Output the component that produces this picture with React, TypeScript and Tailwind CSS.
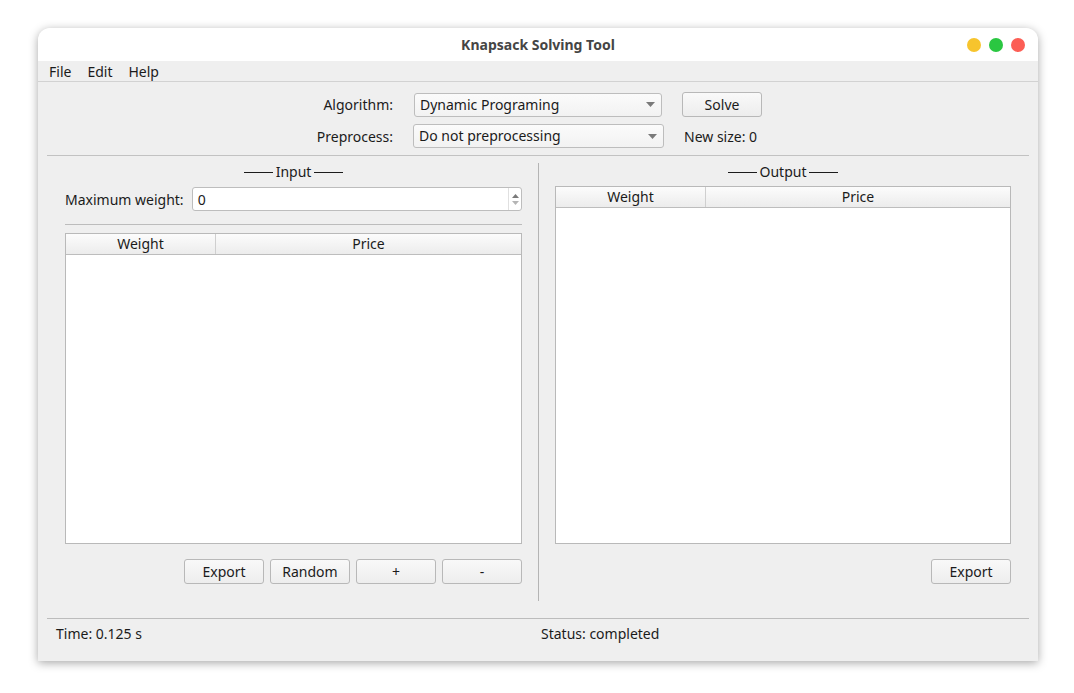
import React from "react";

const font = { fontFamily: '"Noto Sans", "Open Sans", sans-serif' };

function Button({ label, w = "w-[80px]" }: { label: string; w?: string }) {
  return (
    <button
      className={`${w} h-[25px] rounded-[3px] border border-[#b8b8b8] bg-gradient-to-b from-[#f9f9f9] to-[#ededed] text-[14px] leading-none text-[#1b1b1b]`}
    >
      {label}
    </button>
  );
}

function Combo({ value, w }: { value: string; w: string }) {
  return (
    <div
      className={`${w} h-[24px] rounded-[3px] border border-[#bdbdbd] bg-gradient-to-b from-[#fbfbfb] to-[#f2f2f2] flex items-center pl-[5px] pr-[6px] text-[14px] text-[#1b1b1b]`}
    >
      <span className="flex-1 leading-none">{value}</span>
      <svg width="9" height="5" viewBox="0 0 9 5">
        <path d="M0 0h9L4.5 5z" fill="#7a7a7a" />
      </svg>
    </div>
  );
}

function Heading({ text }: { text: string }) {
  return (
    <div className="h-[18px] flex items-center justify-center gap-[3px] text-[14px] leading-[18px]">
      <span className="w-[29px] border-t border-[#1b1b1b] mt-[1px]" />
      <span>{text}</span>
      <span className="w-[29px] border-t border-[#1b1b1b] mt-[1px]" />
    </div>
  );
}

function Table({ h }: { h: string }) {
  return (
    <div className={`w-full ${h} border border-[#b9b9b9] bg-white flex flex-col`}>
      <div className="h-[21px] flex border-b border-[#bdbdbd] bg-gradient-to-b from-[#fcfcfc] to-[#ececec] text-[14px] text-[#1b1b1b]">
        <div className="w-[150px] border-r border-[#cfcfcf] flex items-center justify-center leading-none">
          Weight
        </div>
        <div className="flex-1 flex items-center justify-center leading-none">Price</div>
      </div>
      <div className="flex-1" />
    </div>
  );
}

export default function App() {
  return (
    <div className="w-[1074px] h-[693px] bg-white pt-[28px] pl-[38px]" style={font}>
      <div className="w-[1000px] h-[633px] rounded-t-[12px] bg-[#efefef] shadow-[0_2px_10px_rgba(0,0,0,0.35)] flex flex-col overflow-hidden text-[#1b1b1b]">
        {/* Title bar */}
        <div className="relative h-[33px] bg-white flex items-center justify-center">
          <span className="text-[14px] font-bold text-[#454545] leading-none">Knapsack Solving Tool</span>
          <div className="absolute right-[13px] top-[10px] flex gap-[8px]">
            <span className="w-[14px] h-[14px] rounded-full bg-[#f7c42d]" />
            <span className="w-[14px] h-[14px] rounded-full bg-[#2ac741]" />
            <span className="w-[14px] h-[14px] rounded-full bg-[#fc5e55]" />
          </div>
        </div>

        {/* Menu */}
        <div className="h-[21px] border-b border-[#d2d2d2] flex items-center pl-[11px] text-[14px]">
          <span>File</span>
          <span className="ml-[16px]">Edit</span>
          <span className="ml-[16px]">Help</span>
        </div>

        {/* Top controls */}
        <div className="h-[73px] pt-[10px] flex flex-col gap-[7px] text-[14px]">
          <div className="flex items-center">
            <div className="w-[100px] ml-[255px] text-right">Algorithm:</div>
            <div className="ml-[21px]">
              <Combo value="Dynamic Programing" w="w-[248px]" />
            </div>
            <div className="ml-[20px]">
              <Button label="Solve" />
            </div>
          </div>
          <div className="flex items-center">
            <div className="w-[100px] ml-[255px] text-right">Preprocess:</div>
            <div className="ml-[20px]">
              <Combo value="Do not preprocessing" w="w-[251px]" />
            </div>
            <span className="ml-[20px]">New size: 0</span>
          </div>
        </div>

        <div className="mx-[9px] border-t border-[#c2c2c2]" />

        {/* Main area */}
        <div className="flex pl-[27px] pt-[7px] h-[462px]">
          <div className="w-[457px] flex flex-col">
            <Heading text="Input" />
            <div className="mt-[6px] flex items-center">
              <span className="text-[14px] mr-[8px]">Maximum weight:</span>
              <div className="flex-1 h-[24px] rounded-[3px] border border-[#bdbdbd] bg-white flex items-center pl-[5px] text-[14px]">
                <span className="flex-1">0</span>
                <div className="w-[13px] h-full flex flex-col items-center justify-center gap-[3px] border-l border-[#e0e0e0]">
                  <svg width="7" height="4" viewBox="0 0 7 4">
                    <path d="M0 4h7L3.5 0z" fill="#7a7a7a" />
                  </svg>
                  <svg width="7" height="4" viewBox="0 0 7 4">
                    <path d="M0 0h7L3.5 4z" fill="#b5b5b5" />
                  </svg>
                </div>
              </div>
            </div>
            <div className="mt-[13px] border-t border-[#bcbcbc]" />
            <div className="mt-[8px]">
              <Table h="h-[311px]" />
            </div>
            <div className="mt-[15px] flex justify-end gap-[6px]">
              <Button label="Export" />
              <Button label="Random" />
              <Button label="+" />
              <Button label="-" />
            </div>
          </div>

          <div className="ml-[16px] w-px h-[438px] bg-[#b4b4b4]" />

          <div className="ml-[16px] w-[456px] flex flex-col">
            <Heading text="Output" />
            <div className="mt-[5px]">
              <Table h="h-[358px]" />
            </div>
            <div className="mt-[15px] flex justify-end">
              <Button label="Export" />
            </div>
          </div>
        </div>

        <div className="mx-[9px] border-t border-[#bcbcbc]" />

        {/* Status bar */}
        <div className="flex-1 flex items-center text-[14px] pb-[13px]">
          <span className="ml-[18px] w-[485px]">Time: 0.125 s</span>
          <span>Status: completed</span>
        </div>
      </div>
    </div>
  );
}
